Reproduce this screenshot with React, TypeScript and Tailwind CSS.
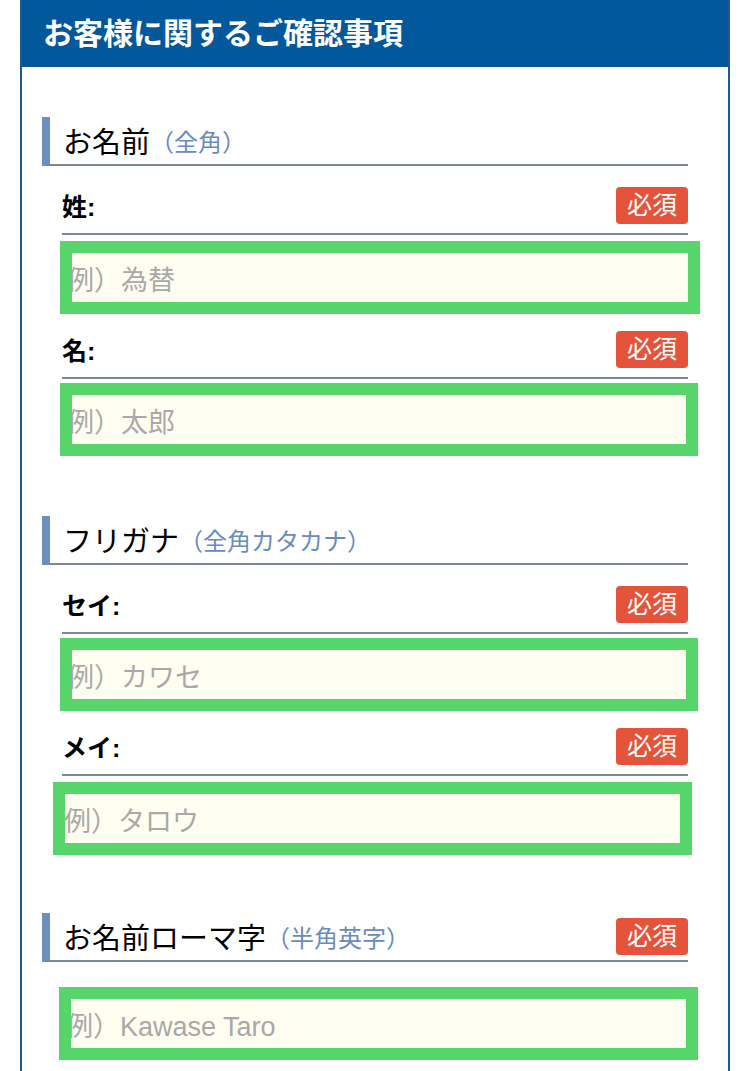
import React from 'react';

type Field = {
  label: string;
  placeholder: string;
  rowTop: string;
  inputTop: string;
  inputBox: string;
  textShift: string;
};

type Section = {
  title: string;
  note: string;
  top: string;
  required?: boolean;
  fields: Field[];
  romaji?: { placeholder: string; inputTop: string; inputBox: string; textShift: string };
};

const sections: Section[] = [
  {
    title: 'お名前',
    note: '（全角）',
    top: 'mt-[50px]',
    fields: [
      { label: '姓:', placeholder: '例）為替', rowTop: 'mt-[21px]', inputTop: 'mt-[6px]', inputBox: 'ml-[18px] w-[640px]', textShift: '-ml-[5px]' },
      { label: '名:', placeholder: '例）太郎', rowTop: 'mt-[17px]', inputTop: 'mt-[4px]', inputBox: 'ml-[18px] w-[638px]', textShift: '-ml-[5px]' },
    ],
  },
  {
    title: 'フリガナ',
    note: '（全角カタカナ）',
    top: 'mt-[60px]',
    fields: [
      { label: 'セイ:', placeholder: '例）カワセ', rowTop: 'mt-[21px]', inputTop: 'mt-[4px]', inputBox: 'ml-[18px] w-[638px]', textShift: '-ml-[5px]' },
      { label: 'メイ:', placeholder: '例）タロウ', rowTop: 'mt-[17px]', inputTop: 'mt-[6px]', inputBox: 'ml-[11px] w-[639px]', textShift: '-ml-[1px]' },
    ],
  },
  {
    title: 'お名前ローマ字',
    note: '（半角英字）',
    top: 'mt-[58px]',
    required: true,
    fields: [],
    romaji: { placeholder: '例）Kawase Taro', inputTop: 'mt-[25px]', inputBox: 'ml-[17px] w-[639px]', textShift: '-ml-[5px]' },
  },
];

function Badge() {
  return (
    <span className="flex h-[37px] w-[72px] items-center justify-center rounded-[4px] bg-[#e4533a] text-[25px] leading-none text-white">
      必須
    </span>
  );
}

function Input({ placeholder, className, textShift }: { placeholder: string; className: string; textShift: string }) {
  return (
    <div className={`h-[73px] border-[12px] border-[#56d66a] bg-[#fffdf0] ${className}`}>
      <div className="flex h-full items-center overflow-hidden pt-[8px]">
        <span className={`whitespace-nowrap text-[27px] leading-none text-[#a9a9a9] ${textShift}`}>{placeholder}</span>
      </div>
    </div>
  );
}

export default function App() {
  return (
    <div className="w-[750px] bg-white px-[20px] font-['Liberation_Sans','Noto_Sans_CJK_JP',sans-serif] text-black">
      <div className="min-h-[1071px] border-x-2 border-[#1f5a8c]">
        <div className="flex h-[67px] items-center bg-[#02589b] pl-[21px] text-[30px] font-bold text-white">
          お客様に関するご確認事項
        </div>
        <div className="pl-[20px] pr-[40px]">
          {sections.map((s) => (
            <section key={s.title} className={s.top}>
              <div className="flex h-[49px] items-center border-b-2 border-l-[8px] border-b-[#7a8898] border-l-[#6c8ec0] pl-[13px]">
                <span className="pt-[5px] text-[29px] leading-none">{s.title}</span>
                <span className="pt-[5px] text-[24px] leading-none text-[#6a8bbb]">{s.note}</span>
                {s.required && (
                  <span className="ml-auto">
                    <Badge />
                  </span>
                )}
              </div>
              {s.fields.map((f) => (
                <div key={f.label}>
                  <div className={`ml-[20px] flex items-center justify-between border-b-2 border-[#7a8898] pb-[9px] ${f.rowTop}`}>
                    <span className="pt-[3px] text-[25px] font-bold leading-none">{f.label}</span>
                    <Badge />
                  </div>
                  <Input placeholder={f.placeholder} className={`${f.inputTop} ${f.inputBox}`} textShift={f.textShift} />
                </div>
              ))}
              {s.romaji && (
                <Input
                  placeholder={s.romaji.placeholder}
                  className={`${s.romaji.inputTop} ${s.romaji.inputBox}`}
                  textShift={s.romaji.textShift}
                />
              )}
            </section>
          ))}
        </div>
      </div>
    </div>
  );
}
